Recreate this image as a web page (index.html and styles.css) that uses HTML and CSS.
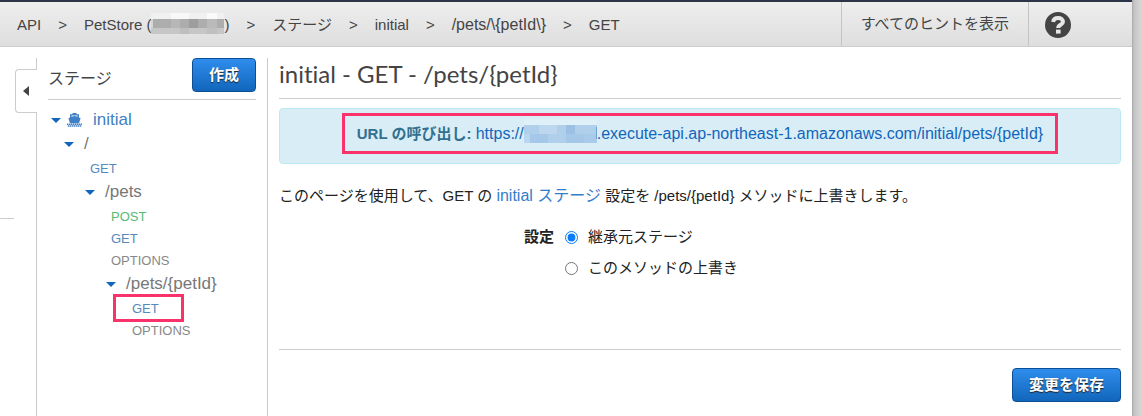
FILE: index.html
```html
<!DOCTYPE html>
<html lang="ja">

<head>
    <meta charset="UTF-8">
    <meta name="viewport" content="width=device-width, initial-scale=1.0">
    <title>API Gateway - ステージ</title>
    <link rel="stylesheet" href="styles.css">
</head>

<body>
    <div class="window">
        <header class="topbar">
            <nav class="crumbs">
                <a href="#">API</a>
                <span>&gt;</span>
                <a href="#">PetStore (<svg class="mask" width="73" height="21" viewBox="0 0 73 21" shape-rendering="crispEdges">
                        <rect width="73" height="6" fill="#f0f0f0" />
                        <rect x="20" width="18" height="6" fill="#f8f8f8" />
                        <rect x="56" width="10" height="6" fill="#fafafa" />
                        <rect y="6" width="73" height="9" fill="#adadad" />
                        <rect y="6" width="2" height="9" fill="#d5d5d5" />
                        <rect x="20" y="6" width="9" height="9" fill="#b5b8b8" />
                        <rect x="38" y="6" width="9" height="9" fill="#9c9e9e" />
                        <rect x="56" y="6" width="10" height="9" fill="#bababa" />
                        <rect y="15" width="73" height="6" fill="#c6c6c6" />
                        <rect x="29" y="15" width="9" height="6" fill="#bebebe" />
                        <rect x="56" y="15" width="10" height="6" fill="#bfbfbf" />
                    </svg>)</a>
                <span>&gt;</span>
                <a href="#">ステージ</a>
                <span>&gt;</span>
                <a href="#">initial</a>
                <span>&gt;</span>
                <a class="path" href="#">/pets/\{petId\}</a>
                <span>&gt;</span>
                <a href="#">GET</a>
            </nav>
            <button class="hints" type="button">すべてのヒントを表示</button>
            <button class="help" type="button" aria-label="ヘルプ">
                <svg width="28" height="28" viewBox="0 0 28 28">
                    <circle cx="14" cy="14" r="13" fill="#444" />
                    <path d="M9.2 11C9.400 8.200 11.300 7 14.200 7c2.800 0 4.800 1.400 4.800 3.700 0 3.200-4.800 2.800-4.800 6.300" fill="none" stroke="#e6e6e6" stroke-width="4" />
                    <rect x="12" y="18.600" width="4.600" height="4" fill="#e6e6e6" />
                </svg>
            </button>
        </header>

        <div class="main">
            <div class="gutter">
                <button class="collapse" type="button" aria-label="閉じる">
                    <svg width="6" height="10" viewBox="0 0 6 10"><path d="M6 0v10L0 5z" fill="#444" /></svg>
                </button>
                <div class="gutter-line"></div>
            </div>

            <aside class="sidebar">
                <div class="sidebar-head">
                    <h2>ステージ</h2>
                    <button class="btn" type="button">作成</button>
                </div>
                <ul class="tree">
                    <li>
                        <a class="stage" href="#">
                            <i class="arrow"></i>
                            <svg class="ship" width="15" height="14" viewBox="0 0 15 14">
                                <path d="M5.500 0h4v1.200H12V4.600l1.600.6L12 10.200H3L1.400 5.200 3 4.600V1.200h2.500z" fill="#4080c4" />
                                <path d="M4.500 2.500h6v1.300L7.500 3 4.500 3.800z" fill="#fff" />
                                <path d="M0 11.200h15M.8 13h14" stroke="#4080c4" stroke-width="1.400" stroke-dasharray="1.500 .5" />
                            </svg>
                            initial
                        </a>
                        <ul class="root">
                            <li>
                                <a class="resource" href="#"><i class="arrow"></i>/</a>
                                <ul>
                                    <li><a class="method get" href="#">GET</a></li>
                                    <li>
                                        <a class="resource" href="#"><i class="arrow"></i>/pets</a>
                                        <ul>
                                            <li><a class="method post" href="#">POST</a></li>
                                            <li><a class="method get" href="#">GET</a></li>
                                            <li><a class="method" href="#">OPTIONS</a></li>
                                            <li>
                                                <a class="resource" href="#"><i class="arrow"></i>/pets/{petId}</a>
                                                <ul>
                                                    <li><a class="method get current" href="#">GET</a></li>
                                                    <li><a class="method" href="#">OPTIONS</a></li>
                                                </ul>
                                            </li>
                                        </ul>
                                    </li>
                                </ul>
                            </li>
                        </ul>
                    </li>
                </ul>
            </aside>

            <main class="content">
                <h1>initial - GET - /pets/{petId}</h1>
                <div class="invoke">
                    <p class="invoke-url"><strong>URL の呼び出し:</strong> <a href="#">https://<svg class="mask" width="73" height="24" viewBox="0 0 73 24" shape-rendering="crispEdges">
                                <rect width="73" height="6" fill="#e0f0f9" />
                                <rect y="6" width="73" height="9" fill="#b0cfea" />
                                <rect x="15" y="6" width="18" height="9" fill="#bcd7ee" />
                                <rect x="42" y="6" width="9" height="9" fill="#9bc0e4" />
                                <rect y="15" width="73" height="9" fill="#a5c8e8" />
                                <rect y="15" width="6" height="9" fill="#b8d6ee" />
                                <rect x="24" y="15" width="18" height="9" fill="#b0cfeb" />
                                <rect x="60" y="15" width="13" height="9" fill="#a9cae9" />
                                <rect x="72" y="8" width="1" height="12" fill="#6fa3d8" />
                            </svg>.execute-api.ap-northeast-1.amazonaws.com/initial/pets/{petId}</a></p>
                </div>
                <p class="lead">このページを使用して、GET の <a href="#">initial ステージ</a> 設定を /pets/{petId} メソッドに上書きします。</p>
                <form class="settings">
                    <div class="settings-label" id="settings">設定</div>
                    <div class="settings-options" role="radiogroup" aria-labelledby="settings">
                        <label><input type="radio" name="mode" checked>継承元ステージ</label>
                        <label><input type="radio" name="mode">このメソッドの上書き</label>
                    </div>
                </form>
                <div class="actions">
                    <button class="btn" type="button">変更を保存</button>
                </div>
            </main>
        </div>
    </div>
</body>

</html>
```
FILE: styles.css
```css
*,
*::after {
    box-sizing: border-box;
    margin: 0;
    padding: 0;
}

body {
    padding-right: 10px;
    background: linear-gradient(to right, #a8a8a8, #c4c4c4 2px, #d8d8d8 10px) right / 10px 100% no-repeat #fff;
    color: #222;
    font: 15px/22px "Liberation Sans", "Noto Sans CJK JP", sans-serif;
}

a {
    color: #1166bb;
    text-decoration: none;
}

ul {
    list-style: none;
}

button {
    font: inherit;
    cursor: pointer;
}

.window {
    display: flex;
    flex-direction: column;
    min-height: 100vh;
    background: #fff;
}

/* breadcrumb bar */
.topbar {
    display: flex;
    height: 47px;
    border-top: 2px solid #2b3448;
    border-bottom: 1px solid #ccc;
    background: linear-gradient(#eee, #dedede);
}

.crumbs {
    display: flex;
    flex: 1;
    align-items: center;
    gap: 17px;
    padding: 2px 0 0 17px;
    white-space: nowrap;
}

.crumbs a,
.crumbs span {
    color: #444;
}

.crumbs .path {
    font-size: 16px;
}

.mask {
    margin-top: -8px;
    vertical-align: -4px;
}

.hints,
.help {
    border: 0;
    border-left: 1px solid #c4c4c4;
    background: none;
    color: #444;
}

.hints {
    padding: 0 19px;
}

.help {
    width: 104px;
    padding: 2px 0 0 15px;
    text-align: left;
}

.help svg {
    display: block;
}

.main {
    display: flex;
    flex: 1;
}

/* left strip with the collapse handle */
.gutter {
    width: 37px;
    margin-top: 11px;
    background: linear-gradient(#ccc, #ccc) right / 1px 100% no-repeat;
}

.collapse {
    display: flex;
    align-items: center;
    width: 22px;
    height: 44px;
    margin: 11px 0 0 15px;
    padding-left: 7px;
    border: 1px solid #ccc;
    border-right: 0;
    border-radius: 4px 0 0 4px;
    background: #fff;
}

.gutter-line {
    width: 14px;
    margin-top: 105px;
    border-top: 1px solid #ccc;
}

.sidebar {
    width: 231px;
    margin-top: 11px;
    padding: 0 11px;
    border-right: 1px solid #ccc;
}

.sidebar-head {
    display: flex;
    align-items: center;
    justify-content: space-between;
    height: 42px;
    padding-bottom: 8px;
    border-bottom: 1px solid #ccc;
}

.sidebar-head h2 {
    padding-top: 8px;
    color: #444;
    font-size: 16px;
    font-weight: normal;
}

.btn {
    height: 34px;
    padding: 0 16px;
    border: 1px solid #0d4f94;
    border-radius: 4px;
    background: linear-gradient(#2f8ded, #1166bb);
    color: #fff;
    font-weight: bold;
    text-shadow: 0 1px 1px #222;
}

/* resource tree */
.tree {
    padding: 8px 0 0 3px;
}

.tree ul {
    padding-left: 21px;
}

.tree .root {
    padding-left: 13px;
}

.stage,
.resource {
    display: flex;
    align-items: center;
    font-size: 17px;
    line-height: 24px;
}

.stage {
    color: #4080c4;
}

.resource {
    gap: 10px;
    padding-bottom: 2px;
    color: #777;
}

.arrow {
    border: 5px solid transparent;
    border-top-color: #1166bb;
    border-bottom: 0;
}

.ship {
    margin: 0 11px 0 6px;
}

.method {
    display: block;
    position: relative;
    padding-left: 5px;
    color: #888;
    font-size: 13px;
}

.get {
    color: #5588bb;
}

.post {
    color: #55bb77;
}

.current::after {
    content: "";
    position: absolute;
    top: -4px;
    left: -14px;
    width: 71px;
    height: 28px;
    border: 3px solid #f9326c;
}

.content {
    display: flex;
    flex: 1;
    flex-direction: column;
    padding: 11px 11px 14px;
}

.content h1 {
    height: 41px;
    margin-bottom: 9px;
    border-bottom: 1px solid #ccc;
    color: #444;
    font: 24px/32px Lato, sans-serif;
    font-variant-ligatures: none;
}

.invoke {
    display: flex;
    justify-content: center;
    padding: 4px 4px 9px;
    border: 1px solid #bce8f1;
    border-radius: 4px;
    background: #d9edf7;
}

.invoke-url {
    padding: 6px 12px 5px;
    border: 3px solid #f9326c;
    line-height: 24px;
}

.invoke-url strong {
    color: #31708f;
}

.invoke-url a,
.lead a {
    font-size: 16px;
}

.lead {
    margin-top: 21px;
}

.lead a {
    color: #337ecc;
}

.settings {
    display: flex;
    gap: 11px;
    margin-top: 19px;
}

.settings-label {
    width: 275px;
    font-weight: bold;
    text-align: right;
}

.settings-options label {
    display: flex;
    align-items: center;
    gap: 10px;
    margin-bottom: 9px;
}

.settings-options input {
    width: 13px;
    height: 13px;
    accent-color: #0a7aff;
}

.actions {
    margin-top: auto;
    padding-top: 18px;
    border-top: 1px solid #ccc;
    text-align: right;
}
```
